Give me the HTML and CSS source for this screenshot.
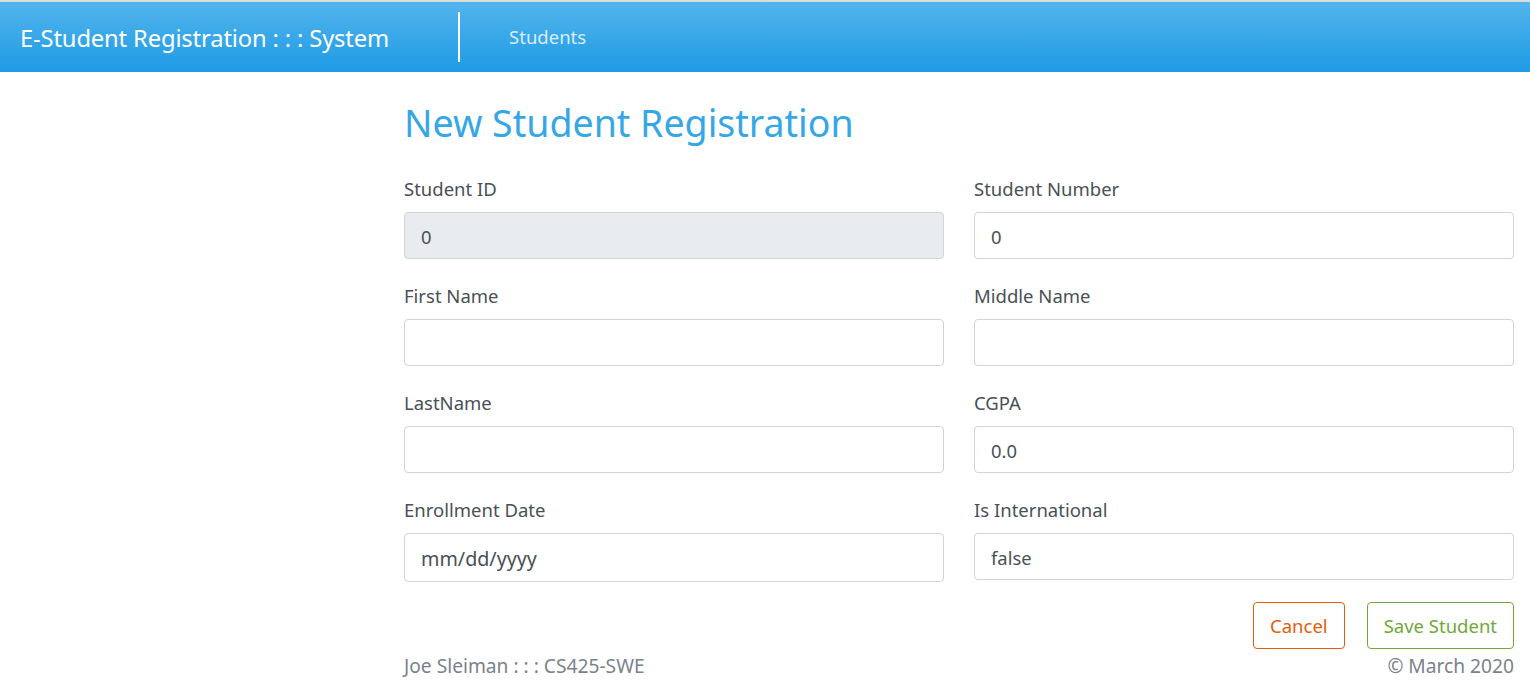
FILE: index.html
```html
<!DOCTYPE html>
<html lang="en">
<head>
<meta charset="utf-8">
<title>New Student Registration</title>
<link rel="stylesheet" href="styles.css">
</head>
<body>
<header class="navbar">
  <a class="brand" href="#">E-Student Registration : : : System</a>
  <span class="divider"></span>
  <a class="nav-link" href="#">Students</a>
</header>
<main class="page">
  <h1 class="title">New Student Registration</h1>
  <form class="form">
    <div class="grid">
      <div class="group">
        <label class="label">Student ID</label>
        <div class="input readonly">0</div>
      </div>
      <div class="group">
        <label class="label">Student Number</label>
        <div class="input">0</div>
      </div>
      <div class="group">
        <label class="label">First Name</label>
        <div class="input"></div>
      </div>
      <div class="group">
        <label class="label">Middle Name</label>
        <div class="input"></div>
      </div>
      <div class="group">
        <label class="label">LastName</label>
        <div class="input"></div>
      </div>
      <div class="group">
        <label class="label">CGPA</label>
        <div class="input">0.0</div>
      </div>
      <div class="group">
        <label class="label">Enrollment Date</label>
        <div class="input date">mm/dd/yyyy</div>
      </div>
      <div class="group">
        <label class="label">Is International</label>
        <div class="input">false</div>
      </div>
    </div>
    <div class="actions">
      <button type="button" class="btn btn-cancel">Cancel</button>
      <button type="button" class="btn btn-save">Save Student</button>
    </div>
  </form>
  <footer class="footer">
    <span>Joe Sleiman : : : CS425-SWE</span>
    <span>&copy; March 2020</span>
  </footer>
</main>
</body>
</html>
```
FILE: styles.css
```css
* { box-sizing: border-box; }
html, body { margin: 0; padding: 0; }
body {
  font-family: "Noto Sans", "Open Sans", sans-serif;
  color: #495057;
  background: #fff;
  border-top: 2px solid #dcdcdc;
}
.navbar {
  height: 70px;
  display: flex;
  align-items: center;
  padding-left: 20px;
  background: linear-gradient(to bottom, #52b4ec, #1e9be5);
}
.brand {
  color: #fff;
  text-decoration: none;
  font-size: 23.75px;
  letter-spacing: -0.15px;
  margin-top: 2px;
}
.divider {
  width: 2px;
  height: 50px;
  background: #fff;
  margin-left: 69px;
  margin-right: 49px;
}
.nav-link {
  color: rgba(255,255,255,0.82);
  text-decoration: none;
  font-size: 18.5px;
  margin-top: -1px;
}
.page {
  margin-left: 404px;
  width: 1110px;
}
.title {
  margin: 23px 0 0;
  font-size: 37.5px;
  font-weight: 400;
  color: #35a7e7;
  line-height: 56px;
}
.grid {
  display: grid;
  grid-template-columns: 540px 540px;
  column-gap: 30px;
  margin-top: 24px;
}
.group { margin-bottom: 23px; }
.label {
  display: block;
  font-size: 18.5px;
  line-height: 27px;
  margin-bottom: 10px;
}
.input {
  height: 47px;
  border: 1px solid #ced4da;
  border-radius: 4px;
  padding: 2px 16px 0;
  display: flex;
  align-items: center;
  font-size: 18.4px;
  color: #495057;
  background: #fff;
}
.input.readonly { background: #e9ecef; }
.input.date { height: 49px; font-size: 19.7px; }
.actions {
  display: flex;
  justify-content: flex-end;
  gap: 22px;
  margin-top: -3px;
}
.btn {
  height: 47px;
  padding: 0 16px;
  border-radius: 4px;
  background: #fff;
  font-family: inherit;
  font-size: 18.5px;
  cursor: pointer;
}
.btn-cancel { border: 1px solid #e35d0f; color: #e35d0f; }
.btn-save { border: 1px solid #71a83a; color: #71a83a; }
.footer {
  display: flex;
  justify-content: space-between;
  color: #7a828a;
  font-size: 19.2px;
  line-height: 24px;
  margin-top: 5px;
}
```
